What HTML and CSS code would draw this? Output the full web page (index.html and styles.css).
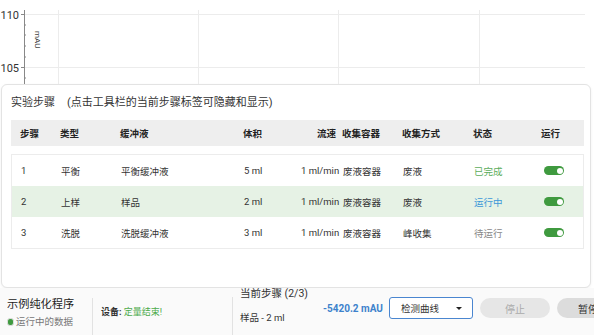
FILE: index.html
```html
<!DOCTYPE html>
<html lang="zh-CN">
<head>
    <meta charset="UTF-8">
    <title>纯化程序 - 实验步骤</title>
    <link rel="stylesheet" href="styles.css">
</head>
<body>
    <div class="chart">
        <svg width="594" height="84" viewBox="0 0 594 84">
            <!-- grid -->
            <g stroke="#ececec" stroke-width="1">
                <line x1="25" y1="14.5" x2="585" y2="14.5"/>
                <line x1="25" y1="67.5" x2="585" y2="67.5"/>
                <line x1="58.5" y1="10" x2="58.5" y2="84"/>
                <line x1="198.5" y1="10" x2="198.5" y2="84"/>
                <line x1="338.5" y1="10" x2="338.5" y2="84"/>
                <line x1="479.5" y1="10" x2="479.5" y2="84"/>
            </g>
            <!-- y axis -->
            <g stroke="#888" stroke-width="1">
                <line x1="24.5" y1="10" x2="24.5" y2="84"/>
                <line x1="21" y1="14.5" x2="24" y2="14.5"/>
                <line x1="21" y1="67.5" x2="24" y2="67.5"/>
                <line x1="24" y1="25" x2="26" y2="25"/>
                <line x1="24" y1="35" x2="26" y2="35"/>
                <line x1="24" y1="46" x2="26" y2="46"/>
                <line x1="24" y1="57" x2="26" y2="57"/>
                <line x1="24" y1="78" x2="26" y2="78"/>
            </g>
            <text class="axis-label" x="19" y="19" text-anchor="end">110</text>
            <text class="axis-label" x="19" y="72" text-anchor="end">105</text>
            <text class="axis-unit" transform="translate(35 31) rotate(90)">mAU</text>
        </svg>
    </div>

    <div class="panel">
        <div class="panel-title"><span class="panel-name">实验步骤</span>(点击工具栏的当前步骤标签可隐藏和显示)</div>

        <div class="step-row step-head">
            <span>步骤</span>
            <span>类型</span>
            <span>缓冲液</span>
            <span>体积</span>
            <span class="num">流速</span>
            <span class="pad">收集容器</span>
            <span>收集方式</span>
            <span>状态</span>
            <span>运行</span>
        </div>

        <div class="step-list">
            <div class="step-row">
                <span>1</span>
                <span>平衡</span>
                <span>平衡缓冲液</span>
                <span>5 ml</span>
                <span class="num">1 ml/min</span>
                <span class="pad">废液容器</span>
                <span>废液</span>
                <span class="status done">已完成</span>
                <span><i class="toggle"></i></span>
            </div>
            <div class="step-row active">
                <span>2</span>
                <span>上样</span>
                <span>样品</span>
                <span>2 ml</span>
                <span class="num">1 ml/min</span>
                <span class="pad">废液容器</span>
                <span>废液</span>
                <span class="status running">运行中</span>
                <span><i class="toggle"></i></span>
            </div>
            <div class="step-row">
                <span>3</span>
                <span>洗脱</span>
                <span>洗脱缓冲液</span>
                <span>3 ml</span>
                <span class="num">1 ml/min</span>
                <span class="pad">废液容器</span>
                <span>峰收集</span>
                <span class="status waiting">待运行</span>
                <span><i class="toggle"></i></span>
            </div>
        </div>
    </div>

    <div class="status-bar">
        <div class="program">
            <div class="program-name">示例纯化程序</div>
            <div class="program-sub"><i class="dot"></i>运行中的数据</div>
        </div>
        <div class="device">
            <b>设备:</b> <span class="ok">定量结束!</span>
        </div>
        <div class="current">
            <div class="current-step">
                <div class="current-title">当前步骤 (2/3)</div>
                <div class="current-sub">样品 - 2 ml</div>
            </div>
            <div class="reading">-5420.2 mAU</div>
            <div class="select">
                <span>检测曲线</span>
                <i class="caret"></i>
            </div>
            <button class="btn btn-stop">停止</button>
            <button class="btn btn-pause">暂停</button>
        </div>
    </div>
</body>
</html>
```

FILE: styles.css
```css
* {
    margin: 0;
    padding: 0;
    box-sizing: border-box;
}

body {
    font-family: Roboto, 'Noto Sans CJK SC', sans-serif;
    color: #333;
    background: #fff;
    width: 594px;
    height: 335px;
    overflow: hidden;
}

.chart {
    height: 84px;
}

.chart svg {
    display: block;
}

.axis-label {
    font-size: 11px;
    fill: #333;
}

.axis-unit {
    font-size: 8px;
    fill: #444;
}

/* steps panel */
.panel {
    height: 204px;
    margin: 0 3px 0 1px;
    padding: 10px 6px 0 9px;
    border: 1px solid #e3e3e3;
    border-radius: 6px;
    background: #fff;
    box-shadow: 0 1px 3px rgba(0, 0, 0, 0.06);
}

.panel-title {
    font-size: 11px;
    line-height: 16px;
    color: #333;
    margin-bottom: 9px;
}

.panel-name {
    margin-right: 12px;
}

.step-row {
    display: grid;
    grid-template-columns: 40px 60px 123px 57px 36px 66px 71px 68px 1fr;
    align-items: center;
    height: 31px;
    padding-left: 9px;
    font-size: 9.5px;
    white-space: nowrap;
}

.step-row .num {
    text-align: right;
}

.step-row .pad {
    padding-left: 6px;
}

.step-head {
    height: 26px;
    background: #eeeeee;
    font-weight: bold;
    color: #222;
    margin-bottom: 8px;
}

.step-list {
    border: 1px solid #ececec;
}

.step-row.active {
    background: #e6f2e5;
}

.status.done {
    color: #5cad5c;
}

.status.running {
    color: #3b97d8;
}

.status.waiting {
    color: #888;
}

.toggle {
    display: block;
    position: relative;
    width: 20px;
    height: 9px;
    margin-left: 2px;
    border-radius: 5px;
    background: #3f9a3f;
}

.toggle::after {
    content: '';
    position: absolute;
    right: 1.5px;
    top: 1.5px;
    width: 6px;
    height: 6px;
    border-radius: 50%;
    background: #fff;
}

/* bottom status bar */
.status-bar {
    display: flex;
    height: 47px;
    background: #fafafa;
}

.program {
    flex-shrink: 0;
    width: 92px;
    padding: 8px 0 0 7px;
}

.program-name {
    font-size: 11.2px;
    line-height: 17px;
    color: #222;
}

.program-sub {
    display: flex;
    align-items: center;
    font-size: 9.5px;
    line-height: 17px;
    color: #777;
    white-space: nowrap;
}

.dot {
    display: inline-block;
    width: 7px;
    height: 8px;
    margin-right: 2px;
    border-radius: 3px;
    background: #3f9a3f;
    border: 1.5px solid #ddd;
}

.device {
    flex-shrink: 0;
    width: 140px;
    margin-top: 10px;
    padding: 7px 0 0 8px;
    border-left: 1px solid #e2e2e2;
    font-size: 9px;
    color: #333;
}

.device .ok {
    color: #4cab4c;
}

.current {
    flex: 1;
    min-width: 0;
    display: flex;
    align-items: center;
    margin-top: 9px;
    border-left: 1px solid #e2e2e2;
    padding-left: 7px;
    gap: 7px;
}

.current-step {
    flex-shrink: 0;
    width: 76px;
    align-self: stretch;
    margin-top: -11px;
    white-space: nowrap;
}

.current-title {
    font-size: 10.5px;
    line-height: 16px;
}

.current-sub {
    font-size: 9.5px;
    line-height: 14px;
    margin-top: 9px;
}

.reading {
    flex-shrink: 0;
    width: 59px;
    margin-top: -16px;
    font-size: 10px;
    font-weight: bold;
    color: #3d82cc;
    white-space: nowrap;
}

.select {
    flex-shrink: 0;
    display: flex;
    align-items: center;
    justify-content: space-between;
    width: 84px;
    height: 22px;
    margin-top: -16px;
    padding: 0 10px 0 11px;
    border: 1px solid #4a86d0;
    border-radius: 3px;
    background: #fff;
    font-size: 9.5px;
}

.caret {
    width: 0;
    height: 0;
    border-left: 3px solid transparent;
    border-right: 3px solid transparent;
    border-top: 3px solid #222;
}

.btn {
    flex-shrink: 0;
    width: 70px;
    height: 20px;
    margin-top: -16px;
    border: none;
    border-radius: 10px;
    font-family: inherit;
    font-size: 10px;
}

.btn-stop {
    background: #e6e6e6;
    color: #aaa;
}

.btn-pause {
    background: #dcdcdc;
    color: #333;
    text-align: left;
    padding-left: 21px;
}
```
